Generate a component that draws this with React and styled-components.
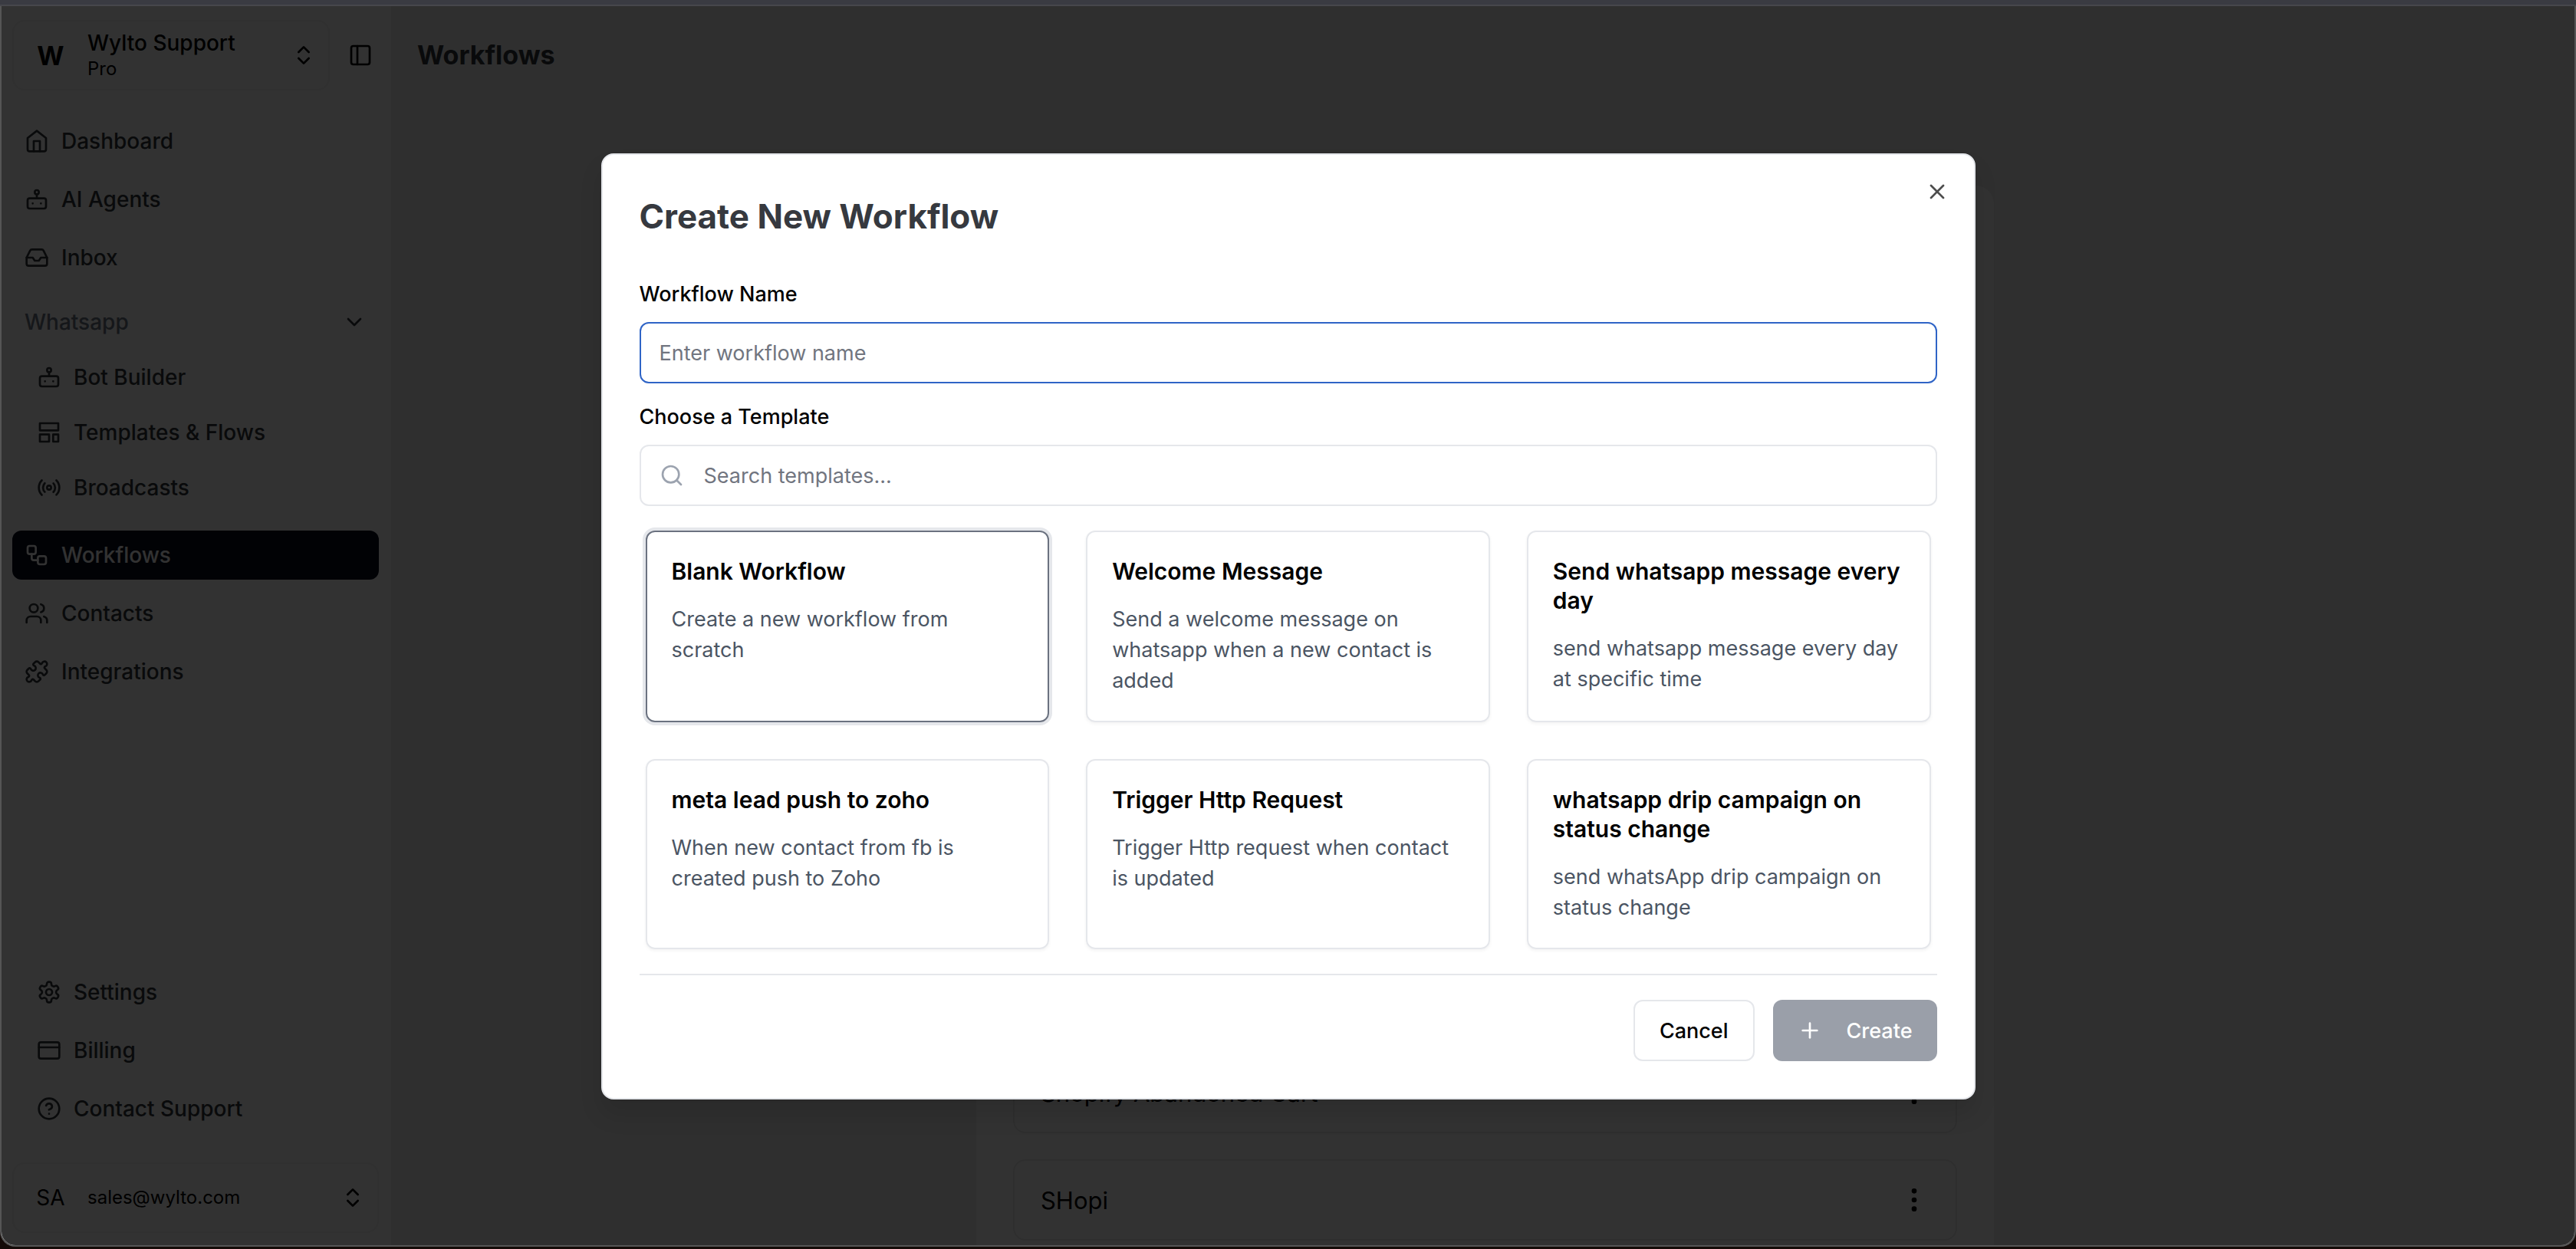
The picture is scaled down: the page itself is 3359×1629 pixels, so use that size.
import React, { useState } from "react";
import styled, { createGlobalStyle } from "styled-components";
import {
  ChevronDown,
  ChevronsUpDown,
  EllipsisVertical,
  PanelLeft,
  Plus,
  Search,
  X,
} from "lucide-react";

// outline icons of the sidebar, all on a 24 grid
const icons = {
  home: (
    <>
      <path d="m3 9 9-7 9 7v11a2 2 0 0 1-2 2H5a2 2 0 0 1-2-2z" />
      <path d="M9 22V12h6v10" />
    </>
  ),
  bot: (
    <>
      <rect width="18" height="10" x="3" y="11" rx="2" />
      <circle cx="12" cy="5" r="2" />
      <path d="M12 7v4M8 16h.01M16 16h.01" />
    </>
  ),
  inbox: (
    <>
      <path d="M22 12h-6l-2 3h-4l-2-3H2" />
      <path d="M5.45 5.11 2 12v6a2 2 0 0 0 2 2h16a2 2 0 0 0 2-2v-6l-3.45-6.89A2 2 0 0 0 16.76 4H7.24a2 2 0 0 0-1.79 1.11z" />
    </>
  ),
  template: <path d="M3 3h18v7H3zM3 14h9v7H3zM16 14h5v7h-5z" />,
  radio: (
    <>
      <path d="M4.9 19.1C1 15.2 1 8.8 4.9 4.9M7.8 16.2c-2.3-2.3-2.3-6.1 0-8.5M16.2 7.8c2.3 2.3 2.3 6.1 0 8.5M19.1 4.9C23 8.8 23 15.1 19.1 19" />
      <circle cx="12" cy="12" r="2" />
    </>
  ),
  workflow: (
    <>
      <rect width="8" height="8" x="3" y="3" rx="2" />
      <path d="M7 11v4a2 2 0 0 0 2 2h4" />
      <rect width="8" height="8" x="13" y="13" rx="2" />
    </>
  ),
  users: (
    <>
      <path d="M16 21v-2a4 4 0 0 0-4-4H6a4 4 0 0 0-4 4v2" />
      <circle cx="9" cy="7" r="4" />
      <path d="M22 21v-2a4 4 0 0 0-3-3.87M16 3.13a4 4 0 0 1 0 7.75" />
    </>
  ),
  puzzle: (
    <path d="M19.439 7.85c-.049.322.059.648.289.878l1.568 1.568c.47.47.706 1.087.706 1.704s-.235 1.233-.706 1.704l-1.611 1.611a.98.98 0 0 1-.837.276c-.47-.07-.802-.48-.968-.925a2.501 2.501 0 1 0-3.214 3.214c.446.166.855.497.925.968a.979.979 0 0 1-.276.837l-1.61 1.61a2.404 2.404 0 0 1-1.705.707 2.402 2.402 0 0 1-1.704-.706l-1.568-1.568a1.026 1.026 0 0 0-.877-.29c-.493.074-.84.504-1.02.968a2.5 2.5 0 1 1-3.237-3.237c.464-.18.894-.527.967-1.02a1.026 1.026 0 0 0-.289-.877l-1.568-1.568A2.402 2.402 0 0 1 1.998 12c0-.617.236-1.234.706-1.704L4.23 8.77c.24-.24.581-.353.917-.303.515.077.877.528 1.073 1.01a2.5 2.5 0 1 0 3.259-3.259c-.482-.196-.933-.558-1.01-1.073-.05-.336.062-.676.303-.917l1.525-1.525A2.402 2.402 0 0 1 12 1.998c.617 0 1.234.236 1.704.706l1.568 1.568c.23.23.556.338.877.29.493-.074.84-.504 1.02-.968a2.5 2.5 0 1 1 3.237 3.237c-.464.18-.894.527-.967 1.02Z" />
  ),
  settings: (
    <>
      <path d="M12.22 2h-.44a2 2 0 0 0-2 2v.18a2 2 0 0 1-1 1.73l-.43.25a2 2 0 0 1-2 0l-.15-.08a2 2 0 0 0-2.73.73l-.22.38a2 2 0 0 0 .73 2.73l.15.1a2 2 0 0 1 1 1.72v.51a2 2 0 0 1-1 1.74l-.15.09a2 2 0 0 0-.73 2.73l.22.38a2 2 0 0 0 2.73.73l.15-.08a2 2 0 0 1 2 0l.43.25a2 2 0 0 1 1 1.73V20a2 2 0 0 0 2 2h.44a2 2 0 0 0 2-2v-.18a2 2 0 0 1 1-1.73l.43-.25a2 2 0 0 1 2 0l.15.08a2 2 0 0 0 2.73-.73l.22-.39a2 2 0 0 0-.73-2.73l-.15-.08a2 2 0 0 1-1-1.74v-.5a2 2 0 0 1 1-1.74l.15-.09a2 2 0 0 0 .73-2.73l-.22-.38a2 2 0 0 0-2.73-.73l-.15.08a2 2 0 0 1-2 0l-.43-.25a2 2 0 0 1-1-1.73V4a2 2 0 0 0-2-2z" />
      <circle cx="12" cy="12" r="3" />
    </>
  ),
  card: (
    <>
      <rect width="20" height="16" x="2" y="4" rx="2" />
      <path d="M2 9h20" />
    </>
  ),
  help: (
    <>
      <circle cx="12" cy="12" r="10" />
      <path d="M9.09 9a3 3 0 0 1 5.83 1c0 2-3 3-3 3M12 17h.01" />
    </>
  ),
};

const mainLinks = [
  { icon: "home", label: "Dashboard" },
  { icon: "bot", label: "AI Agents" },
  { icon: "inbox", label: "Inbox" },
];

const whatsappLinks = [
  { icon: "bot", label: "Bot Builder" },
  { icon: "template", label: "Templates & Flows" },
  { icon: "radio", label: "Broadcasts" },
];

const toolLinks = [
  { icon: "workflow", label: "Workflows", active: true },
  { icon: "users", label: "Contacts" },
  { icon: "puzzle", label: "Integrations" },
];

const footerLinks = [
  { icon: "settings", label: "Settings" },
  { icon: "card", label: "Billing" },
  { icon: "help", label: "Contact Support" },
];

const workflows = ["Shopify Abandoned Cart", "SHopi"];

const templates = [
  { title: "Blank Workflow", text: "Create a new workflow from scratch" },
  {
    title: "Welcome Message",
    text: "Send a welcome message on whatsapp when a new contact is added",
  },
  {
    title: "Send whatsapp message every day",
    text: "send whatsapp message every day at specific time",
  },
  {
    title: "meta lead push to zoho",
    text: "When new contact from fb is created push to Zoho",
  },
  {
    title: "Trigger Http Request",
    text: "Trigger Http request when contact is updated",
  },
  {
    title: "whatsapp drip campaign on status change",
    text: "send whatsApp drip campaign on status change",
  },
];

function NavIcon({ name }) {
  return (
    <Glyph viewBox="0 0 24 24" aria-hidden="true">
      {icons[name]}
    </Glyph>
  );
}

function NavList({ links, nested }) {
  return links.map((link) => (
    <NavLink key={link.label} href="#" $active={link.active} $nested={nested}>
      <NavIcon name={link.icon} />
      {link.label}
    </NavLink>
  ));
}

export default function App() {
  const [name, setName] = useState("");
  const [query, setQuery] = useState("");
  const [selected, setSelected] = useState("Blank Workflow");

  return (
    <Desktop>
      <GlobalStyle />
      <TitleBar />
      <Window>
        <Sidebar>
          <SidebarTop>
            <Switcher type="button">
              <Avatar $bold>W</Avatar>
              <SwitcherText>
                <strong>Wylto Support</strong>
                <span>Pro</span>
              </SwitcherText>
              <ChevronsUpDown size={32} />
            </Switcher>
            <IconButton type="button" aria-label="Toggle sidebar">
              <PanelLeft size={32} />
            </IconButton>
          </SidebarTop>
          <Nav>
            <NavList links={mainLinks} />
            <Group>
              <GroupToggle type="button">
                Whatsapp
                <ChevronDown size={32} />
              </GroupToggle>
              <SubNav>
                <NavList links={whatsappLinks} nested />
              </SubNav>
            </Group>
            <NavList links={toolLinks} />
          </Nav>
          <SidebarBottom>
            <NavList links={footerLinks} nested />
          </SidebarBottom>
          <Switcher type="button">
            <Avatar>SA</Avatar>
            <SwitcherText>
              <span>sales@wylto.com</span>
            </SwitcherText>
            <ChevronsUpDown size={32} />
          </Switcher>
        </Sidebar>

        <Main>
          <PageTitle>Workflows</PageTitle>
          <Panel>
            {workflows.map((workflow) => (
              <WorkflowRow key={workflow}>
                {workflow}
                <IconButton type="button" aria-label={workflow + " options"}>
                  <EllipsisVertical size={40} />
                </IconButton>
              </WorkflowRow>
            ))}
          </Panel>
        </Main>

        <Overlay>
          <Dialog role="dialog" aria-labelledby="dialog-title">
            <CloseButton type="button" aria-label="Close">
              <X size={32} />
            </CloseButton>
            <DialogTitle id="dialog-title">Create New Workflow</DialogTitle>
            <Field>
              <Label htmlFor="workflow-name">Workflow Name</Label>
              <InputBox $active>
                <Input
                  id="workflow-name"
                  placeholder="Enter workflow name"
                  value={name}
                  onChange={(e) => setName(e.target.value)}
                />
              </InputBox>
            </Field>
            <Field>
              <Label htmlFor="template-search">Choose a Template</Label>
              <InputBox>
                <Search size={32} />
                <Input
                  id="template-search"
                  placeholder="Search templates..."
                  value={query}
                  onChange={(e) => setQuery(e.target.value)}
                />
              </InputBox>
            </Field>
            <Templates>
              {templates.map(({ title, text }) => (
                <TemplateCard
                  key={title}
                  type="button"
                  $selected={title === selected}
                  onClick={() => setSelected(title)}
                >
                  <h3>{title}</h3>
                  <p>{text}</p>
                </TemplateCard>
              ))}
            </Templates>
            <Actions>
              <Button type="button">Cancel</Button>
              <Button type="button" $primary disabled={!name}>
                <Plus size={32} />
                Create
              </Button>
            </Actions>
          </Dialog>
        </Overlay>
      </Window>
    </Desktop>
  );
}

const GlobalStyle = createGlobalStyle`
  * {
    box-sizing: border-box;
  }
  body {
    margin: 0;
    font-family: Inter, "Liberation Sans", sans-serif;
    font-size: 28px;
    color: #000;
  }
  h1, h2, h3, p {
    margin: 0;
  }
  button, input {
    font: inherit;
    color: inherit;
  }
  button {
    border: none;
    background: none;
    padding: 0;
    text-align: left;
    cursor: pointer;
  }
  svg {
    flex: none;
  }
`;

const Desktop = styled.div`
  display: flex;
  flex-direction: column;
  height: 100vh;
  padding-bottom: 3px;
  background: #140b08;
`;

const TitleBar = styled.div`
  height: 8px;
  background: #3a3b42;
  border-bottom: 2px solid #47474c;
`;

const Window = styled.div`
  position: relative;
  display: flex;
  flex: 1;
  min-height: 0;
  overflow: hidden;
  background: #e9e9ea;
  border: 2px solid #555;
  border-top: none;
  border-radius: 0 0 20px 20px;
`;

const Sidebar = styled.aside`
  display: flex;
  flex-direction: column;
  width: 508px;
  padding: 18px 16px 16px 14px;
  background: #f8f8f8;
  color: #2f3437;
`;

const SidebarTop = styled.div`
  display: flex;
  align-items: center;
  gap: 24px;
  margin-bottom: 34px;
  padding-right: 8px;
`;

const Switcher = styled.button`
  display: flex;
  align-items: center;
  gap: 16px;
  flex: 1;
  height: 92px;
  padding: 0 16px;
  border: 2px solid #ededed;
  border-radius: 16px;
  color: #000;
  ${Sidebar} > & {
    flex: none;
  }
`;

const Avatar = styled.span`
  display: grid;
  place-items: center;
  width: 64px;
  height: 64px;
  border-radius: 12px;
  font-size: ${(p) => (p.$bold ? "34px" : "28px")};
  font-weight: ${(p) => (p.$bold ? 700 : 400)};
`;

const SwitcherText = styled.span`
  display: flex;
  flex: 1;
  flex-direction: column;
  font-size: 24px;
  line-height: 32px;
  strong {
    font-size: 28px;
    font-weight: 500;
    line-height: 36px;
  }
`;

const IconButton = styled.button`
  display: flex;
  color: #000;
`;

const Nav = styled.nav`
  display: flex;
  flex-direction: column;
  gap: 12px;
`;

const NavLink = styled.a`
  display: flex;
  align-items: center;
  gap: 16px;
  height: 64px;
  padding: 0 ${(p) => (p.$nested ? "32px" : "16px")};
  border-radius: 12px;
  font-weight: 500;
  text-decoration: none;
  color: ${(p) => (p.$active ? "#f9fafb" : "#2f3437")};
  background: ${(p) => (p.$active ? "#080c1c" : "none")};
`;

const Glyph = styled.svg`
  width: 32px;
  height: 32px;
  fill: none;
  stroke: currentColor;
  stroke-width: 2;
  stroke-linecap: round;
  stroke-linejoin: round;
`;

const Group = styled.div`
  padding: 8px 0 12px;
`;

const GroupToggle = styled.button`
  display: flex;
  align-items: center;
  justify-content: space-between;
  width: 100%;
  height: 64px;
  padding: 0 16px;
  font-weight: 500;
  color: #6b7280;
  svg {
    color: #2f3437;
  }
`;

const SubNav = styled.div`
  display: flex;
  flex-direction: column;
  gap: 8px;
  padding-top: 8px;
`;

const SidebarBottom = styled.div`
  display: flex;
  flex-direction: column;
  gap: 12px;
  margin: auto 0 38px;
`;

const Main = styled.main`
  display: flex;
  flex: 1;
  flex-direction: column;
  min-width: 0;
`;

const PageTitle = styled.h1`
  padding: 40px 34px 146px;
  font-size: 34px;
  font-weight: 700;
  line-height: 48px;
  color: #2f3437;
`;

const Panel = styled.section`
  display: flex;
  flex: 1;
  flex-direction: column;
  justify-content: flex-end;
  gap: 34px;
  margin: 0 26.6% 0 26.8%;
  padding: 48px 48px 6px;
  border-radius: 24px 24px 0 0;
  background: #fafafa;
`;

const WorkflowRow = styled.div`
  display: flex;
  align-items: center;
  justify-content: space-between;
  height: 106px;
  padding: 0 34px;
  border: 2px solid #e6e6e6;
  border-radius: 16px;
  font-size: 31px;
  color: #000;
`;

const Overlay = styled.div`
  position: absolute;
  inset: 0;
  display: grid;
  place-items: center;
  padding-top: 2px;
  background: rgba(0, 0, 0, 0.8);
`;

const Dialog = styled.div`
  position: relative;
  width: 1792px;
  max-width: 100%;
  padding: 48px;
  border: 2px solid #e5e7eb;
  border-radius: 16px;
  background: #fff;
  box-shadow: 0 20px 30px rgba(0, 0, 0, 0.1);
`;

const CloseButton = styled.button`
  position: absolute;
  top: 32px;
  right: 32px;
  display: flex;
  color: #4d4d4d;
`;

const DialogTitle = styled.h2`
  margin-bottom: 54px;
  font-size: 44px;
  font-weight: 700;
  line-height: 64px;
  color: #36393f;
`;

const Field = styled.div`
  display: flex;
  flex-direction: column;
  gap: 20px;
  margin-bottom: 28px;
`;

const Label = styled.label`
  font-size: 27px;
  font-weight: 500;
  line-height: 32px;
`;

const InputBox = styled.div`
  display: flex;
  align-items: center;
  gap: 26px;
  height: 80px;
  padding: 0 24px;
  border: 2px solid ${(p) => (p.$active ? "#2f64c6" : "#e5e7eb")};
  border-radius: 12px;
  svg {
    color: #9ca3af;
  }
`;

const Input = styled.input`
  flex: 1;
  min-width: 0;
  height: 100%;
  padding: 0;
  border: none;
  outline: none;
  background: none;
  font-size: 27px;
  &::placeholder {
    color: #71757f;
    opacity: 1;
  }
`;

const Templates = styled.div`
  display: grid;
  grid-template-columns: repeat(3, 1fr);
  gap: 48px;
  padding: 4px 8px 32px;
`;

const TemplateCard = styled.button`
  display: flex;
  flex-direction: column;
  gap: 24px;
  padding: 32px;
  border: 2px solid ${(p) => (p.$selected ? "#6b7280" : "#e5e7eb")};
  border-radius: 12px;
  box-shadow: ${(p) =>
    p.$selected ? "0 0 0 4px #e5e7eb" : "0 2px 4px rgba(0, 0, 0, 0.05)"};
  h3 {
    font-size: 30px;
    font-weight: 600;
    line-height: 38px;
  }
  p {
    font-size: 27px;
    line-height: 40px;
    color: #4b5563;
  }
`;

const Actions = styled.div`
  display: flex;
  justify-content: flex-end;
  gap: 24px;
  padding-top: 32px;
  border-top: 2px solid #e5e7eb;
`;

const Button = styled.button`
  display: flex;
  align-items: center;
  gap: 32px;
  height: 80px;
  padding: 0 32px;
  border: ${(p) => (p.$primary ? "none" : "2px solid #e5e7eb")};
  border-radius: 12px;
  font-size: 27px;
  font-weight: 500;
  color: ${(p) => (p.$primary ? "#fff" : "#000")};
  background: ${(p) => (p.$primary ? "#9a9fa9" : "#fff")};
`;
